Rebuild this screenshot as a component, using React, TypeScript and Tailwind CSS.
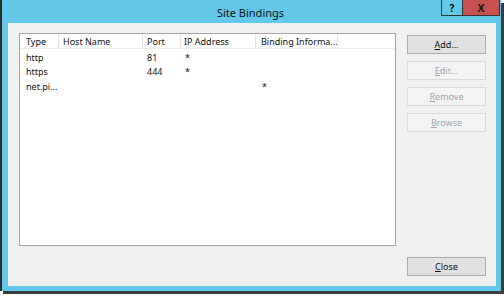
import type { ReactNode } from "react";

type Col = { label: string; width: string; pad: string };

const columns: Col[] = [
	{ label: "Type", width: "w-[39px]", pad: "pl-[6px]" },
	{ label: "Host Name", width: "w-[84px]", pad: "pl-[4px]" },
	{ label: "Port", width: "w-[38px]", pad: "pl-[4px]" },
	{ label: "IP Address", width: "w-[75px]", pad: "pl-[3px]" },
	{ label: "Binding Informa...", width: "w-[82px]", pad: "pl-[5px]" },
];

const rows = [
	["http", "", "81", "*", ""],
	["https", "", "444", "*", ""],
	["net.pi...", "", "", "", "*"],
];

function DialogButton({
	children,
	disabled = false,
}: {
	children: ReactNode;
	disabled?: boolean;
}) {
	return (
		<button
			type="button"
			disabled={disabled}
			className={
				disabled
					? "w-[79px] h-[19px] border border-[#d9d9d9] bg-[#f3f3f3] text-[#a6a6a6] text-[9px] leading-none"
					: "w-[79px] h-[19px] border border-[#adadad] bg-[#e1e1e1] text-[#111] text-[9px] leading-none"
			}
		>
			{children}
		</button>
	);
}

function App() {
	return (
		<div className="w-[504px] h-[297px] bg-white font-['Noto_Sans',sans-serif]">
			<div className="w-[501px] h-[291px] flex flex-col bg-[#63c8ea] border-l-2 border-[#2b2b2b] shadow-[3px_3px_0_#3b3b3b]">
				{/* title bar */}
				<div className="h-[23px] flex items-start">
					<div className="w-[58px]" />
					<div className="flex-1 text-center text-[11px] text-[#111] leading-none pt-[7px]">
						Site Bindings
					</div>
					<div className="flex h-[16px] mr-[1px]">
						<div className="w-[22px] h-full flex items-center justify-center border border-t-0 border-[#333] text-[10px] font-bold leading-none text-black">
							?
						</div>
						<div className="w-[37px] h-full flex items-center justify-center bg-[#c75050] border border-l-0 border-t-0 border-[#333] text-[11px] font-bold leading-none text-[#1a1a1a]">
							X
						</div>
					</div>
				</div>

				{/* content */}
				<div className="flex-1 ml-[6px] mr-[5px] mb-[5px] bg-[#f0f0f0] flex pl-[11px] pr-[10px] pt-[10px] pb-[10px]">
					<div className="w-[377px] h-[213px] border border-[#a3a3a3] bg-white text-[9px] text-[#111]">
						<div className="h-[15px] flex border-b border-[#ececec]">
							{columns.map((c) => (
								<div
									key={c.label}
									className={`${c.width} ${c.pad} h-full flex items-center border-r border-[#e3e3e3] whitespace-nowrap overflow-hidden leading-none`}
								>
									{c.label}
								</div>
							))}
						</div>
						<div className="pt-[1px]">
							{rows.map((r, i) => (
								<div key={i} className="h-[14.5px] flex items-center">
									{r.map((cell, j) => (
										<div
											key={j}
											className={`${columns[j].width} ${j === 0 ? "pl-[6px]" : j === 4 ? "pl-[6px]" : "pl-[4px]"} whitespace-nowrap leading-none`}
										>
											{cell}
										</div>
									))}
								</div>
							))}
						</div>
					</div>

					<div className="ml-auto flex flex-col pt-[2px]">
						<div className="flex flex-col gap-[7px]">
							<DialogButton>
								<span className="underline">A</span>dd...
							</DialogButton>
							<DialogButton disabled>
								<span className="underline">E</span>dit...
							</DialogButton>
							<DialogButton disabled>
								<span className="underline">R</span>emove
							</DialogButton>
							<DialogButton disabled>
								<span className="underline">B</span>rowse
							</DialogButton>
						</div>
						<div className="mt-auto">
							<DialogButton>
								<span className="underline">C</span>lose
							</DialogButton>
						</div>
					</div>
				</div>
			</div>
		</div>
	);
}

export default App;
